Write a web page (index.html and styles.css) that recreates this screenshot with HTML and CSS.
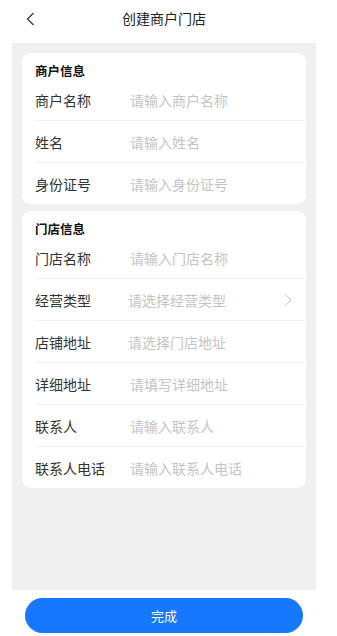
FILE: index.html
```html
<!DOCTYPE html>
<html lang="zh-CN">
<head>
<meta charset="utf-8">
<title>创建商户门店</title>
<link rel="stylesheet" href="styles.css">
</head>
<body>
<div class="page">
  <header class="nav">
    <span class="back">
      <svg width="9" height="14" viewBox="0 0 9 14"><path d="M7.5 1 L1.5 7 L7.5 13" fill="none" stroke="#333" stroke-width="1.2"/></svg>
    </span>
    <h1 class="nav-title">创建商户门店</h1>
  </header>
  <main class="content">
    <section class="card">
      <div class="card-title">商户信息</div>
      <div class="row"><span class="label">商户名称</span><span class="ph">请输入商户名称</span></div>
      <div class="row"><span class="label">姓名</span><span class="ph">请输入姓名</span></div>
      <div class="row"><span class="label">身份证号</span><span class="ph">请输入身份证号</span></div>
    </section>
    <section class="card">
      <div class="card-title">门店信息</div>
      <div class="row"><span class="label">门店名称</span><span class="ph">请输入门店名称</span></div>
      <div class="row picker"><span class="label">经营类型</span><span class="ph">请选择经营类型</span>
        <svg class="arrow" width="8" height="14" viewBox="0 0 8 14"><path d="M1 1 L7 7 L1 13" fill="none" stroke="#c8c8c8" stroke-width="1"/></svg>
      </div>
      <div class="row picker"><span class="label">店铺地址</span><span class="ph">请选择门店地址</span></div>
      <div class="row"><span class="label">详细地址</span><span class="ph">请填写详细地址</span></div>
      <div class="row"><span class="label">联系人</span><span class="ph">请输入联系人</span></div>
      <div class="row"><span class="label">联系人电话</span><span class="ph">请输入联系人电话</span></div>
    </section>
  </main>
  <footer class="footer">
    <button class="submit">完成</button>
  </footer>
</div>
</body>
</html>
```
FILE: styles.css
```css
* { box-sizing: border-box; }
html, body { margin: 0; padding: 0; background: #fff; }
body {
  font-family: "Noto Sans CJK SC", "Noto Sans", sans-serif;
  color: #333;
}
.page { width: 328px; }
.nav {
  height: 43px;
  display: flex;
  align-items: center;
  justify-content: center;
  position: relative;
}
.back {
  position: absolute;
  left: 26px;
  top: 12px;
  display: flex;
}
.nav-title {
  margin: 0;
  font-size: 14px;
  font-weight: 400;
  color: #222;
  line-height: 20px;
  margin-top: -8px;
}
.content {
  margin: 0 12px;
  height: 547px;
  background: #f0f0f0;
  padding: 10px 10px;
  display: flex;
  flex-direction: column;
  gap: 7px;
}
.card {
  background: #fff;
  border-radius: 9px;
  padding-top: 10px;
}
.card-title {
  margin-left: 13px;
  font-size: 12.5px;
  font-weight: 700;
  color: #111;
  line-height: 16px;
  height: 16px;
}
.row {
  margin-left: 13px;
  height: 42px;
  display: flex;
  align-items: center;
  border-bottom: 1px solid #f0f0f0;
  padding-right: 14px;
}
.row:last-child { border-bottom: none; height: 41px; }
.label {
  width: 95px;
  flex: none;
  font-size: 14px;
  color: #333;
}
.picker .label { width: 93px; }
.ph {
  flex: 1;
  font-size: 14px;
  color: #c4c4c4;
}
.arrow { flex: none; }
.footer {
  padding: 8px 25px 0;
}
.submit {
  width: 100%;
  height: 35px;
  border: none;
  border-radius: 18px;
  background: #1677ff;
  color: #fff;
  font-family: inherit;
  font-size: 13px;
  padding: 0;
}
```
